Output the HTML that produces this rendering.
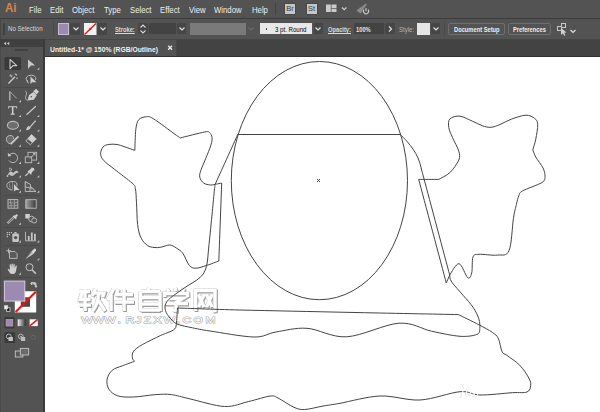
<!DOCTYPE html>
<html><head><meta charset="utf-8">
<style>
*{margin:0;padding:0;box-sizing:border-box}
html,body{width:600px;height:412px;overflow:hidden;background:#fff;font-family:"Liberation Sans",sans-serif}
.a{position:absolute}
#menubar{left:0;top:0;width:600px;height:18px;background:#535353}
.m{position:absolute;font-size:9px;line-height:9px;top:5.5px;color:#eeeeee;white-space:nowrap;transform:scaleX(.86);transform-origin:0 0}
#sep1{left:0;top:18px;width:600px;height:1px;background:#3c3c3c}
#ctrl{left:0;top:19px;width:600px;height:20px;background:#535353}
.t{position:absolute;font-size:7px;line-height:7px;color:#dadada;white-space:nowrap;transform:scaleX(.82);transform-origin:0 0;font-weight:bold}
.u{text-decoration:underline}
.box{position:absolute;background:#464646;border-radius:1px}
.chev{position:absolute;width:8px;height:6px}
#tabbar{left:45px;top:39px;width:555px;height:18px;background:#434343;border-top:1px solid #464646}
#tab{left:45px;top:40px;width:132px;height:17px;background:#525252;border-right:1px solid #474747}
#panel{left:0;top:39px;width:43px;height:373px;background:#535353}
#phead{left:0;top:39px;width:43px;height:8px;background:#404040}
#pborder{left:43px;top:39px;width:2px;height:373px;background:#3b3b3b}
.btn{position:absolute;border:1px solid #6e6e6e;border-radius:2px;height:12px;top:23px}
</style></head><body>
<div id="menubar" class="a">
  <div class="m" style="left:4.5px;top:2px;font-size:12.5px;line-height:13px;color:#d6864c;transform:scaleX(.92);font-weight:bold">Ai</div>
  <div class="m" style="left:28.5px">File</div>
  <div class="m" style="left:49.5px">Edit</div>
  <div class="m" style="left:72px">Object</div>
  <div class="m" style="left:103.5px">Type</div>
  <div class="m" style="left:129.5px">Select</div>
  <div class="m" style="left:159.5px">Effect</div>
  <div class="m" style="left:188.5px">View</div>
  <div class="m" style="left:214px">Window</div>
  <div class="m" style="left:251.5px">Help</div>
  <div class="a" style="left:275px;top:3px;width:1px;height:12px;background:#444"></div>
  <div class="a" style="left:285px;top:4px;width:10px;height:10px;background:#c6c6c6;color:#3c3c3c;font-size:7.5px;line-height:10.5px;text-align:center;box-shadow:0 0 0 1px #484848">Br</div>
  <div class="a" style="left:306.6px;top:4px;width:10px;height:10px;background:#c6c6c6;color:#3c3c3c;font-size:7.5px;line-height:10.5px;text-align:center;box-shadow:0 0 0 1px #484848">St</div>
  <svg class="a" style="left:326px;top:4px" width="24" height="10">
    <rect x="0" y="0.5" width="4.8" height="7.5" fill="#cacaca"/>
    <rect x="5.5" y="0.5" width="5" height="3.8" fill="#cacaca"/>
    <rect x="5.5" y="5" width="5" height="3" fill="#cacaca"/>
    <path d="M16 3.5 L18.2 5.7 L20.4 3.5" stroke="#d0d0d0" stroke-width="1.2" fill="none"/>
  </svg>
  <svg class="a" style="left:355px;top:2px" width="16" height="14">
    <path d="M1.5 8.5 L10.5 1.8 C11.5 1.5 12 2.2 11.5 3 L5.5 11.5 Z" fill="#8c8c8c"/>
    <path d="M3.5 6.5 L9 3.5" stroke="#6e6e6e" stroke-width="0.8"/>
    <circle cx="11" cy="9.5" r="3.6" fill="#535353"/>
    <path d="M8.9 7.6 A2.6 2.6 0 1 0 13.1 7.6" stroke="#c8c8c8" stroke-width="1.1" fill="none"/>
    <path d="M11 6 V9.3" stroke="#c8c8c8" stroke-width="1.1"/>
  </svg>
</div>
<div id="sep1" class="a"></div>
<div id="ctrl" class="a">
  <div class="a" style="left:0;top:0;width:1px;height:20px;background:#474747"></div>
  <div class="a" style="left:3px;top:4px;width:2px;height:12px;background:#404040"></div>
  <div class="t" style="left:8px;top:5.5px;color:#d8d8d8;transform:scaleX(.87);font-weight:normal">No Selection</div>
  <div class="a" style="left:53px;top:2px;width:1px;height:16px;background:#4a4a4a"></div>
  <!-- fill -->
  <div class="box" style="left:70px;top:4px;width:10px;height:11.5px"></div>
  <div class="a" style="left:57.5px;top:3.8px;width:11.5px;height:12px;background:#9a89b1;border:1px solid #c4bdd0"></div>
  <svg class="chev" style="left:71.5px;top:7px"><path d="M1.5 1.5 L4 4 L6.5 1.5" stroke="#e0e0e0" stroke-width="1.2" fill="none"/></svg>
  <!-- stroke -->
  <div class="box" style="left:97px;top:4px;width:10px;height:11.5px"></div>
  <svg class="a" style="left:84px;top:3.8px" width="12.5" height="12"><rect x="0" y="0" width="12.5" height="12" fill="#f2f2f2"/><circle cx="6.2" cy="6" r="1.3" fill="#777"/><path d="M0.5 11.5 L12 0.5" stroke="#e8171a" stroke-width="1.4"/></svg>
  <svg class="chev" style="left:98.5px;top:7px"><path d="M1.5 1.5 L4 4 L6.5 1.5" stroke="#e0e0e0" stroke-width="1.2" fill="none"/></svg>
  <div class="t u" style="left:114.5px;top:7px">Stroke:</div>
  <div class="box" style="left:138px;top:4.3px;width:10px;height:11px"></div>
  <svg class="a" style="left:139px;top:5px" width="8" height="10"><path d="M1.5 3.5 L4 1 L6.5 3.5 M1.5 6.5 L4 9 L6.5 6.5" stroke="#d8d8d8" stroke-width="1.1" fill="none"/></svg>
  <div class="box" style="left:149px;top:4.3px;width:26.5px;height:11px;background:#434343"></div>
  <div class="box" style="left:176.5px;top:4.3px;width:9.5px;height:11px"></div>
  <svg class="chev" style="left:177.5px;top:7px"><path d="M1.5 1.5 L4 4 L6.5 1.5" stroke="#e0e0e0" stroke-width="1.2" fill="none"/></svg>
  <div class="a" style="left:190px;top:3.5px;width:55.5px;height:12.5px;background:#7a7a7a"></div>
  <svg class="chev" style="left:246.5px;top:7px"><path d="M1.5 1.5 L4 4 L6.5 1.5" stroke="#6a6a6a" stroke-width="1.2" fill="none"/></svg>
  <div class="a" style="left:260px;top:4.2px;width:52px;height:11.3px;background:#e8e8e8"></div>
  <div class="a" style="left:265.5px;top:9px;width:1.5px;height:1.5px;background:#333;border-radius:1px"></div>
  <div class="t" style="left:274.5px;top:6.5px;color:#000;font-weight:normal;transform:scaleX(.87)">3 pt. Round</div>
  <div class="box" style="left:313.5px;top:4.2px;width:9px;height:11.3px"></div>
  <svg class="chev" style="left:314px;top:7px"><path d="M1.5 1.5 L4 4 L6.5 1.5" stroke="#e0e0e0" stroke-width="1.2" fill="none"/></svg>
  <div class="t u" style="left:328px;top:7px">Opacity:</div>
  <div class="box" style="left:354px;top:4.3px;width:30px;height:11px;background:#434343"></div>
  <div class="t" style="left:355.5px;top:6.5px;color:#e6e6e6">100%</div>
  <div class="box" style="left:384.8px;top:4.3px;width:9.8px;height:11px"></div>
  <svg class="a" style="left:386px;top:6px" width="8" height="8"><path d="M3 1.5 L5.5 4 L3 6.5" stroke="#e0e0e0" stroke-width="1.2" fill="none"/></svg>
    <div class="t" style="left:399px;top:7px;color:#b4b4b4;font-weight:normal;transform:scaleX(.86)">Style:</div>
  <div class="box" style="left:430.8px;top:4.2px;width:9.2px;height:11.3px"></div>
  <div class="a" style="left:417.3px;top:4px;width:12.5px;height:11.8px;background:#e6e6e6"></div>
  <svg class="chev" style="left:431.5px;top:7px"><path d="M1.5 1.5 L4 4 L6.5 1.5" stroke="#e0e0e0" stroke-width="1.2" fill="none"/></svg>
  <div class="a" style="left:444px;top:2px;width:1px;height:16px;background:#4a4a4a"></div>
  <div class="btn" style="left:448px;width:57px;top:4px"></div>
  <div class="t" style="left:454px;top:7px;color:#efefef">Document Setup</div>
  <div class="btn" style="left:507.7px;width:43px;top:4px"></div>
  <div class="t" style="left:513px;top:7px;color:#efefef">Preferences</div>
  <svg class="a" style="left:556px;top:3px" width="22" height="14">
    <rect x="1.5" y="4.5" width="4" height="4" stroke="#c8c8c8" fill="none"/>
    <rect x="5.5" y="1.5" width="4" height="4" stroke="#c8c8c8" fill="none"/>
    <path d="M5 6 L5 13 L6.8 11.3 L8.2 13.8 L9.4 13.2 L8.2 10.7 L10.6 10.5 Z" fill="#d0d0d0"/>
    <path d="M14.5 8 L17 10.5 L19.5 8" stroke="#e0e0e0" stroke-width="1.2" fill="none"/>
  </svg>
</div>
<div id="tabbar" class="a"></div>
<div id="tab" class="a"></div>
<div class="a" style="left:45px;top:56px;width:555px;height:1px;background:#303030"></div>
<div class="a" style="left:50px;top:46px;font-size:7px;line-height:7px;color:#f0f0f0;white-space:nowrap;font-weight:bold;transform:scaleX(.965);transform-origin:0 0">Untitled-1* @ 150% (RGB/Outline)</div>
<svg class="a" style="left:166px;top:44px" width="8" height="8"><path d="M2.2 1.8 L6 5.8 M6 1.8 L2.2 5.8" stroke="#e8e8e8" stroke-width="1.4"/></svg>
<div id="panel" class="a"></div>
<div id="phead" class="a"></div>
<div id="pborder" class="a"></div>
<svg class="a" style="left:3px;top:41px" width="7" height="5"><path d="M3.2 0.8 L0.8 2.5 L3.2 4.2 Z M6.3 0.8 L3.9 2.5 L6.3 4.2 Z" fill="#c4c4c4"/></svg>
<div class="a" style="left:0;top:47px;width:1px;height:365px;background:#4a4a4a"></div>
<div class="a" style="left:15px;top:49px;width:12.5px;height:2px;background:#404040"></div>

<!-- TOOLS -->
<svg id="tools" class="a" style="left:0;top:0" width="45" height="412">
<g stroke="#4a4a4a" stroke-width="1"><path d="M4 87.5H40 M4 148.5H40 M4 195.5H40 M4 227.5H40 M4 245.5H40 M4 277.5H40"/></g>
<rect x="4.5" y="57" width="16.5" height="13" rx="1.5" fill="#3a3a3a"/>
<g fill="#c4c4c4">
<path d="M37 69.8 L39.3 67.5 L39.3 69.8Z M18.7 102.3 L21 100 L21 102.3Z M18.7 117 L21 114.7 L21 117Z M37 117 L39.3 114.7 L39.3 117Z M18.7 131.5 L21 129.2 L21 131.5Z M37 131.5 L39.3 129.2 L39.3 131.5Z M18.7 146.7 L21 144.4 L21 146.7Z M37 146.7 L39.3 144.4 L39.3 146.7Z M18.7 163.9 L21 161.6 L21 163.9Z M37 163.9 L39.3 161.6 L39.3 163.9Z M18.7 177.5 L21 175.2 L21 177.5Z M37 177.5 L39.3 175.2 L39.3 177.5Z M18.7 192.7 L21 190.4 L21 192.7Z M37 192.7 L39.3 190.4 L39.3 192.7Z M18.7 224.7 L21 222.4 L21 224.7Z M18.7 242.5 L21 240.2 L21 242.5Z M37 242.5 L39.3 240.2 L39.3 242.5Z M37 260.3 L39.3 258 L39.3 260.3Z M18.7 274.7 L21 272.4 L21 274.7Z"/>
</g>
<!-- selection -->
<path d="M10 59.5 L10 68.8 L13 65.6 L16.8 65.6 Z" fill="#3a3a3a" stroke="#c8c8c8" stroke-width="1.1" stroke-linejoin="round"/>
<path d="M28 59.4 L28 68.9 L31 65.6 L35.2 65.6 Z" fill="#c8c8c8"/>
<!-- magic wand -->
<path d="M8.4 83.4 L15 76.8" stroke="#c8c8c8" stroke-width="1.4"/>
<path d="M10.5 74.3 L11.6 77.4 M9.5 75.9 L12.6 75.9 M15.4 73.5 L16.6 75.6 M14.9 74.6 L17.1 74.6" stroke="#c0c0c0" stroke-width="0.9"/>
<circle cx="17" cy="78.3" r="0.8" fill="#c0c0c0"/>
<!-- lasso -->
<path d="M28 81.5 C25 80 25.5 76 30 75.3 C34.5 74.8 36.8 77.5 35.5 80" stroke="#bdbdbd" stroke-width="1" fill="none"/>
<path d="M27.5 80 C26.5 82 28 83.5 29 82.5" stroke="#bdbdbd" stroke-width="0.9" fill="none"/>
<path d="M30.5 76.5 L30.5 84 L32.3 82.3 L36.5 82.3 Z" fill="#cdcdcd"/>
<!-- anchor / curvature -->
<path d="M9.8 91.5 L9.8 100.5" stroke="#a8a8a8" stroke-width="1.6"/>
<path d="M9.8 91.5 L16.8 98.5" stroke="#a8a8a8" stroke-width="1"/>
<!-- pen -->
<path d="M27.5 100.5 L29 95 L33.5 92 L36.8 95.3 L33.8 99.8 Z" fill="#cfcfcf"/>
<path d="M33.2 91.3 L36.1 88.8 L39 91.7 L36.5 94.5 Z" fill="#cfcfcf"/>
<path d="M27.5 100.5 C24 99 26 96 26.5 94 C27 92 25 91 25.3 90.8" stroke="#c0c0c0" stroke-width="0.9" fill="none"/>
<circle cx="31.3" cy="96.8" r="0.8" fill="#535353"/>
<!-- type -->
<path d="M8.2 106.2 H17.1 V108.5 H16.3 V107.3 H13.4 V113.5 H14.6 V114.7 H10.7 V113.5 H11.9 V107.3 H9 V108.5 H8.2 Z" fill="#d0d0d0"/>
<!-- line -->
<path d="M26.5 114.7 L35.8 106.2" stroke="#c8c8c8" stroke-width="1.2"/>
<!-- ellipse -->
<ellipse cx="12.9" cy="125.3" rx="5.5" ry="3.9" fill="#6e6e6e" stroke="#bdbdbd" stroke-width="1.1"/>
<!-- brush -->
<path d="M26.1 130.2 C26.5 128 27.3 126.6 29 126 L30.7 127.6 C30 129.4 28.4 130.2 26.1 130.2Z" fill="#cfcfcf"/>
<path d="M29.8 126.4 L35 120.6 C35.6 120.2 36 120.5 35.8 121.2 L30.6 127.2Z" fill="#cfcfcf"/>
<!-- shaper -->
<path d="M10.5 143.8 C5.5 143 5 136.5 9.5 135.5 C12.5 135 14 137 13.6 139" stroke="#bdbdbd" stroke-width="1" fill="#6a6a6a"/>
<path d="M10.7 144 L18.5 136.4" stroke="#c8c8c8" stroke-width="1.8"/>
<!-- eraser -->
<path d="M25.8 141 L31.5 134.6 L36.3 138.9 L30.4 144.7 Z" fill="none" stroke="#c0c0c0" stroke-width="0.9"/>
<path d="M27.6 139 L31.5 134.6 L36.3 138.9 L32.2 142.7 Z" fill="#cfcfcf"/>
<!-- rotate -->
<path d="M9.6 154.6 A4.7 4.7 0 1 1 9 160.5" stroke="#bdbdbd" stroke-width="1" fill="none"/>
<path d="M7.8 152.8 L8 156.5 L11.5 156" fill="#c8c8c8"/>
<!-- scale -->
<rect x="28" y="152.3" width="8.6" height="7.8" fill="none" stroke="#bdbdbd" stroke-width="0.9"/>
<rect x="25.3" y="156.9" width="6.4" height="5.8" fill="#535353" stroke="#bdbdbd" stroke-width="0.9"/>
<path d="M30 158.5 L35 153.5 M33 153.5 H35 V155.5" stroke="#c8c8c8" stroke-width="0.9" fill="none"/>
<!-- warp -->
<path d="M7.5 175.5 C9 172 10.5 170.5 12 172 C13.5 173.5 14.5 172 15.5 171 C17 170 18.8 171.5 18.5 173 C17 172.2 15.5 173.5 14 175 C12.5 176.5 10.5 176 9.5 174.5" fill="#c4c4c4"/>
<path d="M9 169 C10 167.5 11.8 168 11.5 170 C11 171 9.5 171.5 9.8 169.5" stroke="#c4c4c4" stroke-width="0.9" fill="none"/>
<circle cx="7.5" cy="176" r="0.9" fill="#c4c4c4"/>
<!-- pin -->
<path d="M25.3 176 L29 172.3" stroke="#c8c8c8" stroke-width="1.2"/>
<path d="M27.5 171.2 L31.2 174.9 L31.8 172.4 L33.6 170.6 L34.5 170.8 L33.9 168 L31.1 167.4 L31.3 168.3 L29.5 170.1Z" fill="#cfcfcf"/>
<!-- shape builder -->
<path d="M12.5 190 C7 190 6 185.5 7.5 183.3 C9 181.5 13 181 15.5 182 C17.5 183 17.5 185.5 16 186.5" stroke="#bdbdbd" stroke-width="1" fill="none"/>
<path d="M9.5 183.5 L10 189 M12.5 182 L12.5 189.5" stroke="#9a9a9a" stroke-width="0.8"/>
<path d="M14 184 L14 191.5 L15.8 190 L19.5 190 Z" fill="#cfcfcf"/>
<!-- perspective grid -->
<path d="M25.3 181.6 L25.3 191.5 L36 191.5 Z M25.3 181.6 L30 184.5 L30 191.5 M25.3 186.5 L33 188.5" stroke="#bdbdbd" stroke-width="0.9" fill="none"/>
<path d="M25.3 181.6 L30.5 184.5 L30.5 188 L25.3 187Z" fill="#5c5c5c" stroke="#c4c4c4" stroke-width="0.8"/>
<path d="M30.5 188.5 H34 M30.5 190 H35.5" stroke="#9a9a9a" stroke-width="0.6"/>
<!-- mesh -->
<rect x="8" y="199.6" width="9.8" height="8.6" fill="#5a5a5a" stroke="#c0c0c0" stroke-width="0.9"/>
<path d="M8.5 203 C11 201.5 13 204.5 17.5 202 M8.5 206 C11 204.5 13.5 207 17.5 205 M10.8 199.8 C10 203 12 205 11 208 M14.5 199.8 C13.8 203 15.5 205 14.3 208" stroke="#aaaaaa" stroke-width="0.8" fill="none"/>
<!-- gradient -->
<defs><linearGradient id="gr1" x1="0" x2="1" y1="0" y2="0"><stop offset="0" stop-color="#9e9e9e"/><stop offset="1" stop-color="#3c3c3c"/></linearGradient>
<linearGradient id="gr2" x1="0" x2="1"><stop offset="0" stop-color="#f0f0f0"/><stop offset="1" stop-color="#2e2e2e"/></linearGradient></defs>
<rect x="25.8" y="199.7" width="10.4" height="8.5" fill="url(#gr1)" stroke="#c0c0c0" stroke-width="0.9"/>
<!-- eyedropper -->
<path d="M7.6 223.3 L14.2 216.7" stroke="#bdbdbd" stroke-width="2.3"/>
<path d="M8.3 222.6 L13.8 217.1" stroke="#535353" stroke-width="0.9"/>
<path d="M13.5 215.8 L16.3 218.6 M14.8 217.3 L17.3 214.8" stroke="#cfcfcf" stroke-width="2"/>
<!-- blend -->
<rect x="25.3" y="214" width="4.5" height="4.5" fill="#cfcfcf"/>
<circle cx="31.5" cy="219" r="2.8" fill="#535353" stroke="#c0c0c0" stroke-width="0.9"/>
<circle cx="34.2" cy="220.5" r="2.5" fill="#535353" stroke="#c0c0c0" stroke-width="0.9"/>
<!-- symbol sprayer -->
<path d="M6.7 232 h1.2 v1.2 h-1.2z M8.8 232 h1.2 v1.2 h-1.2z M10.9 232 h1.2 v1.2 h-1.2z M6.7 234 h1.2 v1.2 h-1.2z M8.8 234 h1.2 v1.2 h-1.2z M6.7 236 h1.2 v1.2 h-1.2z" fill="#c0c0c0"/>
<rect x="12.3" y="233.5" width="6.6" height="8.4" rx="1.2" fill="#c4c4c4"/>
<path d="M14 233.5 C14 231.5 17 231.5 17 233.5" fill="#c4c4c4"/>
<circle cx="15.6" cy="237.6" r="1.7" fill="#535353"/>
<!-- column graph -->
<path d="M25.5 231.8 V240.8 H36.2" stroke="#bdbdbd" stroke-width="0.9" fill="none"/>
<path d="M27.8 236 h1.8 v4.4 h-1.8z M30.9 232.6 h1.8 v7.8 h-1.8z M34 233.8 h1.8 v6.6 h-1.8z" fill="#c4c4c4"/>
<!-- artboard -->
<path d="M9.5 251.5 H15 L17.1 253.6 V258.4 H9.5 Z" fill="#5a5a5a" stroke="#bdbdbd" stroke-width="0.9"/>
<path d="M6.3 250.8 H11 M8.6 248.6 V253.3" stroke="#c4c4c4" stroke-width="0.9"/>
<!-- slice -->
<path d="M25.4 259.2 L31.2 251.8 L33.4 254 Z" fill="#cfcfcf"/>
<path d="M31.2 251.8 L34.2 248.8 C35 248.1 36.6 249.6 36 250.6 L33.4 254 Z" fill="#d6d6d6"/>
<path d="M27.2 257 L31.8 252.6" stroke="#6a6a6a" stroke-width="0.6"/>
<!-- hand -->
<path d="M10.5 273.8 C9 272 7.3 269.5 7.8 268.8 C8.3 268.3 9.5 269.3 10 270 L9.6 264.8 C9.7 264 10.8 264 11 264.8 L11.3 268 L11.5 263.9 C11.7 263.2 12.7 263.2 12.8 263.9 L13 268 L13.5 264.3 C13.7 263.6 14.7 263.7 14.7 264.5 L14.6 268.3 L15.7 265.8 C16 265.2 17 265.4 16.9 266.2 L16 271 C15.5 273 14.5 274 13.5 274 Z" fill="#cfcfcf"/>
<!-- zoom -->
<circle cx="29.5" cy="267.2" r="3.5" fill="none" stroke="#c4c4c4" stroke-width="1"/>
<path d="M32 269.8 L35.8 273.6" stroke="#c4c4c4" stroke-width="1.6"/>
<!-- stroke swatch -->
<path d="M14.8 291.3 H36.2 V312.5 H14.8 Z M20.9 297.4 V306.6 H30 V297.4 Z" fill="#ffffff" fill-rule="evenodd"/>
<rect x="20.9" y="297.4" width="9.1" height="9.2" fill="#4a4a4a"/>
<path d="M15.6 312 L35.8 291.8" stroke="#ee1111" stroke-width="2.1"/>
<!-- fill swatch -->
<rect x="4.4" y="281.1" width="20.4" height="20" fill="#9d8ab3" stroke="#d4cce0" stroke-width="1"/>
<!-- swap -->
<path d="M31.5 282.5 L34.5 282.5 C35.5 282.5 36 283 36 284 L36 286.5 M30.5 283.5 L32 282 L32 285 Z M35 286 L37 286 L36 287.5Z" stroke="#c4c4c4" stroke-width="0.9" fill="#c4c4c4"/>
<!-- default -->
<rect x="6.5" y="307.8" width="3.5" height="3.5" fill="#111" stroke="#ddd" stroke-width="0.8"/>
<rect x="4.3" y="305.5" width="3.5" height="3.5" fill="#eee" stroke="#ccc" stroke-width="0.5"/>
<!-- mode row -->
<rect x="4.4" y="317" width="10.2" height="11.4" rx="1" fill="#3a3a3a"/>
<rect x="6" y="319.3" width="6.9" height="6.8" fill="#9d8ab3" stroke="#b9b0c8" stroke-width="0.5"/>
<rect x="17.7" y="319.3" width="8.2" height="6.8" fill="url(#gr2)"/>
<rect x="29.6" y="319.3" width="8.2" height="6.8" fill="#fff"/>
<path d="M29.8 326 L37.6 319.4" stroke="#ee1111" stroke-width="1.6"/>
<!-- draw modes -->
<rect x="4.4" y="332.2" width="10.7" height="10.7" rx="1" fill="#3a3a3a"/>
<circle cx="8.8" cy="336.5" r="2.4" fill="none" stroke="#c4c4c4" stroke-width="0.9"/>
<rect x="8.5" y="337" width="4.4" height="4" fill="#c4c4c4"/>
<circle cx="20.8" cy="336.5" r="2.4" fill="none" stroke="#bdbdbd" stroke-width="0.9"/>
<rect x="21" y="337" width="4.2" height="4" fill="#bdbdbd"/>
<circle cx="21" cy="336.6" r="0.9" fill="#bdbdbd"/>
<rect x="28" y="332.2" width="11" height="10.7" rx="1" fill="none" stroke="#5c5c5c" stroke-width="0.6"/>
<circle cx="33.3" cy="337.3" r="2.2" fill="none" stroke="#6a6a6a" stroke-width="0.8"/>
<!-- screen mode -->
<rect x="15.3" y="351" width="7.6" height="6" fill="#5a5a5a" stroke="#c4c4c4" stroke-width="0.9"/>
<rect x="20.3" y="348.4" width="8.4" height="6.6" fill="#6a6a6a" stroke="#c4c4c4" stroke-width="0.9"/>
</svg>


<!-- DRAWING -->

<svg id="wm" class="a" style="left:0;top:0" width="600" height="412">
<defs><g id="wmg">
<path d="M79 291.5H90 M85 289V311 M82.5 291.5L80 299.5H90.5 M79 305H91 M95.5 289L92 296 M94.5 293H104L102.5 297 M98.5 294.5C98 303 95.5 307 92.5 311 M98.5 300.5L105 311
M113.5 289L107.5 300 M111 295V311 M118 289L116 296 M116 294.5H133 M114.5 302H134 M124 289V311
M149 288L148 291 M140.5 291.5V311 M140.5 291.5H160 M160 291.5V311 M140.5 297.5H160 M140.5 304H160 M140.5 310H160
M167 289L169 292 M175 288L176 291 M184 288L182 292 M164.5 297V293.5H187.5V297 M169 298.5H182.5L176 302.5 M164 303.5H188 M176 301V310.5L173 310
M195.5 311V290.5H215V310.5L212.5 311 M198.5 294.5L204 307 M204 294.5L198.5 307 M206.5 294.5L212 307 M212 294.5L206.5 307"/>
</g></defs>
<use href="#wmg" transform="translate(1,1)" stroke="#9a9a9a" stroke-width="3.8" fill="none"/>
<use href="#wmg" stroke="#cccccc" stroke-width="4.2" fill="none"/>
<use href="#wmg" stroke="#ffffff" stroke-width="3" fill="none"/>
<text x="66.23 75.74 85.08 96.07 102.62 110.82 117.54 125.57 133.61 144.26 149.18 158.20 168.03" y="322.8" font-family="Liberation Sans" font-size="9.8" fill="#fff" stroke="#aaaaaa" stroke-width="1.1" paint-order="stroke" transform="translate(0.4,0.4) scale(1.22,1)">WWW.RJZXW.COM</text>
</svg>
<svg id="draw" class="a" style="left:0;top:0" width="600" height="412"><g fill="none" stroke="#444444" stroke-width="1"><ellipse cx="319.4" cy="180.6" rx="88.1" ry="119.1"/>
<path d="M237.5 134.5 H400"/>
<path d="M216.3 184.1 C217.2 183.9 220.8 183.3 221.7 183.1 C221.2 196.1 219.3 248.0 218.8 261.0 C216.8 261.7 210.6 264.2 206.8 265.4 C203.0 266.6 198.8 268.2 195.9 268.2 C193.0 268.2 191.5 267.9 189.3 265.4 C187.1 262.9 185.0 256.2 182.8 253.3 C180.6 250.4 178.4 249.3 176.2 247.9 C174.0 246.5 172.2 245.1 169.7 245.0 C167.1 244.9 163.5 246.8 160.9 247.2 C158.3 247.6 156.2 247.8 154.0 247.5 C151.8 247.2 149.6 247.0 147.4 245.4 C145.2 243.8 142.5 241.2 140.9 237.7 C139.3 234.2 138.3 230.4 137.6 224.6 C136.9 218.8 136.9 208.8 136.5 202.8 C136.1 196.8 136.1 191.9 135.4 188.6 C134.7 185.3 135.6 186.3 132.1 183.1 C128.6 179.9 119.1 173.0 114.4 169.2 C109.7 165.4 106.0 163.1 103.7 160.5 C101.4 157.9 100.7 156.0 100.6 153.7 C100.5 151.4 101.8 148.4 103.2 146.8 C104.6 145.2 106.7 144.8 109.0 144.4 C111.3 144.0 114.5 144.1 117.0 144.5 C119.5 144.9 121.1 145.6 124.1 146.6 C127.1 147.6 133.0 149.8 134.8 150.4 C135.0 146.9 135.2 134.5 135.8 129.4 C136.5 124.3 137.0 121.8 138.7 119.7 C140.4 117.6 143.5 117.0 145.9 116.8 C148.3 116.6 148.5 115.8 153.3 118.7 C158.2 121.6 170.5 131.1 175.0 134.3 C179.5 137.5 179.5 137.3 180.4 137.9 C184.4 136.9 199.8 132.9 204.7 132.0 C209.5 131.1 208.3 131.7 209.5 132.6 C210.7 133.5 211.8 135.4 212.0 137.5 C212.2 139.6 212.0 141.6 210.9 145.2 C209.8 148.8 207.3 154.6 205.6 158.8 C203.9 163.0 201.8 167.4 200.8 170.5 C199.8 173.6 199.3 175.2 199.8 177.3 C200.3 179.4 201.9 181.8 203.7 183.1 C205.5 184.4 208.4 184.8 210.5 185.0 C212.6 185.2 215.3 184.2 216.3 184.1 Z"/>
<path d="M237.7 134.6 C234.0 142.8 219.0 175.8 215.3 184.0 C215.2 185.0 214.9 185.4 214.4 190.0 C213.9 194.6 213.2 202.7 212.3 211.8 C211.4 220.9 210.0 235.5 209.0 244.6 C208.0 253.7 207.9 261.0 206.4 266.5 C204.9 272.0 203.6 274.0 200.0 277.5 C196.4 281.0 189.9 284.1 185.0 287.5 C180.1 290.9 173.7 295.1 170.4 298.0 C167.1 300.9 166.0 302.5 165.3 304.9 C164.6 307.3 165.1 309.9 166.2 312.5 C167.3 315.1 170.1 318.2 172.1 320.2 C174.1 322.2 174.6 323.1 178.0 324.4 C181.4 325.7 187.2 326.7 192.5 327.8 C197.8 328.9 199.8 329.5 210.0 331.0 C220.2 332.5 243.0 336.8 254.0 337.0 C265.0 337.2 267.2 333.4 276.0 332.0 C284.8 330.6 295.2 327.5 307.0 328.3 C318.8 329.1 331.4 337.7 346.7 336.8 C362.0 335.9 384.9 324.1 399.0 323.2 C413.1 322.3 421.4 329.0 431.6 331.2 C441.8 333.4 452.4 335.8 460.0 336.3 C467.6 336.8 473.6 335.7 476.9 334.4 C480.2 333.1 479.5 331.1 479.8 328.5 C480.1 325.9 479.9 322.4 478.8 318.8 C477.7 315.2 475.6 311.1 473.0 307.2 C470.4 303.3 466.9 299.7 463.3 295.5 C459.8 291.3 454.0 285.4 451.7 282.0 C449.4 278.6 450.0 276.2 449.7 275.0 C445.4 259.0 428.9 197.1 424.1 179.2 C419.3 161.3 422.1 171.1 421.1 167.6 C420.1 164.1 419.3 160.9 418.0 157.9 C416.7 154.9 415.0 152.1 413.2 149.4 C411.4 146.7 409.3 144.0 407.1 141.5 C404.9 139.0 401.1 135.4 399.9 134.2"/>
<path d="M177.5 308.0 C187.9 308.3 211.2 309.3 240.0 310.0 C268.8 310.7 313.6 311.6 350.0 312.4 C386.4 313.2 440.3 314.2 458.4 314.6 C461.8 316.3 473.1 321.7 478.8 324.7 C484.5 327.7 489.1 330.1 492.4 332.4 C495.6 334.7 496.7 335.1 498.3 338.3 C499.9 341.5 500.7 349.0 502.1 351.8 C503.5 354.6 503.9 353.1 506.8 355.3 C509.7 357.5 516.0 361.4 519.7 365.2 C523.4 369.0 527.0 374.6 528.8 378.0 C530.6 381.4 531.0 383.0 530.7 385.3 C530.4 387.6 530.1 390.8 527.0 392.0 C523.9 393.2 520.1 392.2 512.3 392.7 C504.5 393.2 488.7 395.2 480.0 395.0 C471.3 394.8 470.0 390.9 460.0 391.7 C450.0 392.5 433.3 399.3 420.0 400.0 C406.7 400.7 393.3 395.4 380.0 396.0 C366.7 396.6 349.4 401.6 340.0 403.3 C330.6 405.0 329.2 405.0 323.3 406.0 C317.4 407.0 309.6 409.3 304.7 409.5 C299.8 409.7 298.4 409.2 294.0 407.3 C289.6 405.4 282.0 399.9 278.0 398.0 C274.0 396.1 274.9 395.5 270.0 396.1 C265.1 396.7 256.2 399.8 248.7 401.5 C241.1 403.2 234.5 406.9 224.7 406.5 C214.9 406.1 198.9 400.9 190.0 398.9 C181.1 396.9 177.0 395.3 171.3 394.6 C165.6 393.9 162.1 394.2 155.8 394.6 C149.5 395.0 139.8 396.8 133.5 397.0 C127.2 397.2 122.0 397.2 117.9 395.9 C113.8 394.6 110.7 392.0 108.9 389.2 C107.1 386.4 106.5 382.4 107.1 379.2 C107.7 376.0 109.8 372.4 112.3 370.2 C114.8 368.0 118.6 367.3 122.3 365.8 C126.0 364.3 132.5 362.1 134.6 361.3 C134.2 360.8 132.6 359.7 132.4 358.0 C132.2 356.3 131.8 353.5 133.5 351.3 C135.2 349.1 137.9 347.2 142.4 344.6 C146.9 342.0 156.2 337.6 160.3 335.6 C164.4 333.7 164.6 334.0 167.0 332.9 C169.4 331.8 173.2 330.7 174.8 328.9 C176.4 327.1 176.1 325.5 176.5 322.0 C176.9 318.5 177.3 310.3 177.5 308.0 Z"/>
<path d="M418.7 179.4 C422.0 179.4 435.4 179.4 438.8 179.4 C440.6 178.2 446.7 175.7 450.0 172.5 C453.3 169.3 457.3 163.5 458.8 160.0 C460.2 156.5 459.8 155.0 458.8 151.2 C457.7 147.5 454.2 141.5 452.5 137.5 C450.8 133.5 449.2 130.6 448.8 127.5 C448.3 124.4 448.1 120.6 450.0 118.8 C451.9 116.9 456.2 115.8 460.0 116.2 C463.8 116.7 468.8 119.7 472.5 121.2 C476.2 122.8 479.4 124.7 482.5 125.8 C485.6 126.8 488.0 127.5 490.9 127.3 C493.8 127.1 496.6 125.9 500.0 124.5 C503.4 123.1 507.2 120.6 511.5 119.1 C515.8 117.5 522.2 115.3 526.0 115.2 C529.8 115.1 532.5 116.8 534.5 118.3 C536.5 119.8 537.5 121.0 537.7 124.4 C537.9 127.9 536.6 134.8 535.8 139.0 C535.0 143.2 533.3 148.0 532.8 149.8 C533.3 151.0 534.1 154.1 535.8 157.1 C537.5 160.1 541.5 164.8 543.0 168.0 C544.5 171.2 545.2 174.1 545.0 176.5 C544.8 178.9 545.6 180.2 541.8 182.6 C538.0 185.0 526.2 188.8 522.4 191.0 C518.6 193.2 519.8 193.7 518.8 195.9 C517.8 198.1 517.3 200.6 516.4 204.4 C515.5 208.2 514.6 211.0 513.4 218.7 C512.2 226.4 511.7 244.6 509.0 250.7 C506.3 256.8 502.4 254.5 497.4 255.1 C492.4 255.7 483.1 254.0 479.0 254.3 C474.9 254.6 474.2 253.9 473.0 257.0 C471.8 260.1 472.6 269.6 471.7 273.0 C470.8 276.4 469.8 279.2 467.7 277.7 C465.6 276.1 462.0 264.1 459.0 263.7 C456.0 263.2 451.2 273.1 449.7 275.0 C449.1 276.3 446.9 281.7 446.3 283.0 C441.7 265.7 423.3 196.7 418.7 179.4 Z"/>
<path d="M317 179h1v1h-1z M319 179h1v1h-1z M318 180h1v1h-1z M317 181h1v1h-1z M319 181h1v1h-1z" fill="#444" stroke="none"/></g></svg>
<svg id="wm2" class="a" style="left:0;top:0" width="600" height="412"><g fill="#ffffff" opacity="0.8"><rect x="462" y="388" width="1.3" height="8"/><rect x="465.9" y="388" width="1.3" height="8"/><rect x="469.8" y="388" width="1.2" height="8"/><rect x="473.6" y="388" width="1.3" height="8"/><rect x="477" y="389" width="1.1" height="8"/></g>
<path d="M462.5 386 L463.5 389 M461 393 L461.5 396 C461 398 459.5 398 459 397 M465 393 L466.5 396.5 L468 393.5 L469.5 396.5 L471 393 M476 393.5 C474 392.5 472.5 394 473 396 C473.5 397.5 475.5 397.5 477 396.5" stroke="#e4e4e4" stroke-width="0.9" fill="none"/></svg>
</body></html>
